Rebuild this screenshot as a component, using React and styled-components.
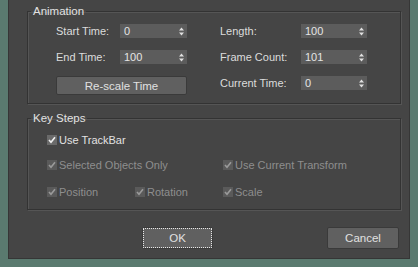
import React from 'react'
import styled, { createGlobalStyle } from 'styled-components'

const GlobalStyle = createGlobalStyle`
  html, body {
    margin: 0;
    padding: 0;
    background: #5a7a6f;
  }
  * { box-sizing: border-box; }
`

const Frame = styled.div`
  width: 418px;
  height: 267px;
  background: #454545;
  border: 8px solid #5a7a6f;
  border-top: none;
  box-shadow: inset 1px 0 0 #363636, inset -1px 0 0 #363636, inset 0 -1px 0 #363636;
  padding: 4px 9px 0 19px;
  font-family: "Liberation Sans", Arial, sans-serif;
  font-size: 11px;
  color: #dcdcdc;
  display: flex;
  flex-direction: column;
`

const Group = styled.fieldset`
  margin: ${p => p.$top || 0}px 0 0 0;
  padding: 0;
  border: 1px solid #333;
  box-shadow: 1px 1px 0 #555, inset 1px 1px 0 #555;
  min-width: 0;
`

const Legend = styled.legend`
  margin-left: 3px;
  padding: 0 2px;
  line-height: 14px;
  font-size: 11.5px;
  color: #e2e2e2;
`

const AnimGrid = styled.div`
  display: grid;
  grid-template-columns: 64px 67px 33px 81px 66px;
  grid-template-rows: 14px 14px 19px;
  row-gap: 12px;
  align-items: start;
  padding: 6px 0 8px 28px;
`

const Label = styled.span`
  grid-column: ${p => p.$col};
  line-height: 14px;
  white-space: nowrap;
`

const Spinner = styled.div`
  grid-column: ${p => p.$col};
  height: 14px;
  background: #5c5c5c;
  display: flex;
  align-items: center;
  justify-content: space-between;
  padding: 0 3px 0 4px;
  line-height: 14px;
  color: #e4e4e4;
`

const Button = styled.button`
  grid-column: ${p => p.$col || 'auto'};
  width: ${p => p.$w || 'auto'};
  height: ${p => p.$h}px;
  background: #606060;
  border: 1px solid #3a3a3a;
  border-radius: 2px;
  color: #e0e0e0;
  font: inherit;
  font-size: 11.5px;
  padding: 0;
  outline: ${p => (p.$focus ? '1px dotted #e8e8e8' : 'none')};
  outline-offset: -2px;
`

const CheckGrid = styled.div`
  display: grid;
  grid-template-columns: 88px 88px auto;
  grid-template-rows: 25px 27px 16px;
  align-items: start;
  padding: 7px 0 9px 19px;
`

const CheckRow = styled.label`
  grid-column: ${p => p.$col};
  display: flex;
  align-items: center;
  gap: 2px;
  height: 16px;
  white-space: nowrap;
  color: ${p => (p.$disabled ? '#8e8e8e' : '#e2e2e2')};
`

const Box = styled.span`
  width: 10px;
  height: 10px;
  background: ${p => (p.$disabled ? '#5a5a5a' : '#6a6a6a')};
  display: flex;
  align-items: center;
  justify-content: center;
`

const Footer = styled.div`
  display: flex;
  justify-content: flex-end;
  gap: 114px;
  padding-right: 2px;
  margin-top: 17px;
`

const Arrows = () => (
  <svg width="5" height="9" viewBox="0 0 5 9">
    <path d="M0 3.5 L2.5 0.5 L5 3.5 Z M0 5.5 L2.5 8.5 L5 5.5 Z" fill="#e0e0e0" />
  </svg>
)

const Check = ({ disabled }) => (
  <Box $disabled={disabled}>
    <svg width="8" height="8" viewBox="0 0 8 8">
      <path
        d="M1 4 L3 6.3 L7 1.2"
        fill="none"
        stroke={disabled ? '#9a9a9a' : '#f0f0f0'}
        strokeWidth="1.6"
      />
    </svg>
  </Box>
)

const Spin = ({ col, value }) => (
  <Spinner $col={col}>
    <span>{value}</span>
    <Arrows />
  </Spinner>
)

const CheckItem = ({ col, disabled, children }) => (
  <CheckRow $col={col} $disabled={disabled}>
    <Check disabled={disabled} />
    {children}
  </CheckRow>
)

export default function App() {
  return (
    <Frame>
      <GlobalStyle />
      <Group>
        <Legend>Animation</Legend>
        <AnimGrid>
          <Label $col="1">Start Time:</Label>
          <Spin col="2" value="0" />
          <Label $col="4">Length:</Label>
          <Spin col="5" value="100" />

          <Label $col="1">End Time:</Label>
          <Spin col="2" value="100" />
          <Label $col="4">Frame Count:</Label>
          <Spin col="5" value="101" />

          <Button $col="1 / 3" $h={19}>Re-scale Time</Button>
          <Label $col="4">Current Time:</Label>
          <Spin col="5" value="0" />
        </AnimGrid>
      </Group>

      <Group $top={7}>
        <Legend>Key Steps</Legend>
        <CheckGrid>
          <CheckItem col="1 / 4">Use TrackBar</CheckItem>
          <CheckItem col="1 / 3" disabled>Selected Objects Only</CheckItem>
          <CheckItem col="3" disabled>Use Current Transform</CheckItem>
          <CheckItem col="1" disabled>Position</CheckItem>
          <CheckItem col="2" disabled>Rotation</CheckItem>
          <CheckItem col="3" disabled>Scale</CheckItem>
        </CheckGrid>
      </Group>

      <Footer>
        <Button $w="71px" $h={22} $focus>OK</Button>
        <Button $w="72px" $h={22}>Cancel</Button>
      </Footer>
    </Frame>
  )
}
